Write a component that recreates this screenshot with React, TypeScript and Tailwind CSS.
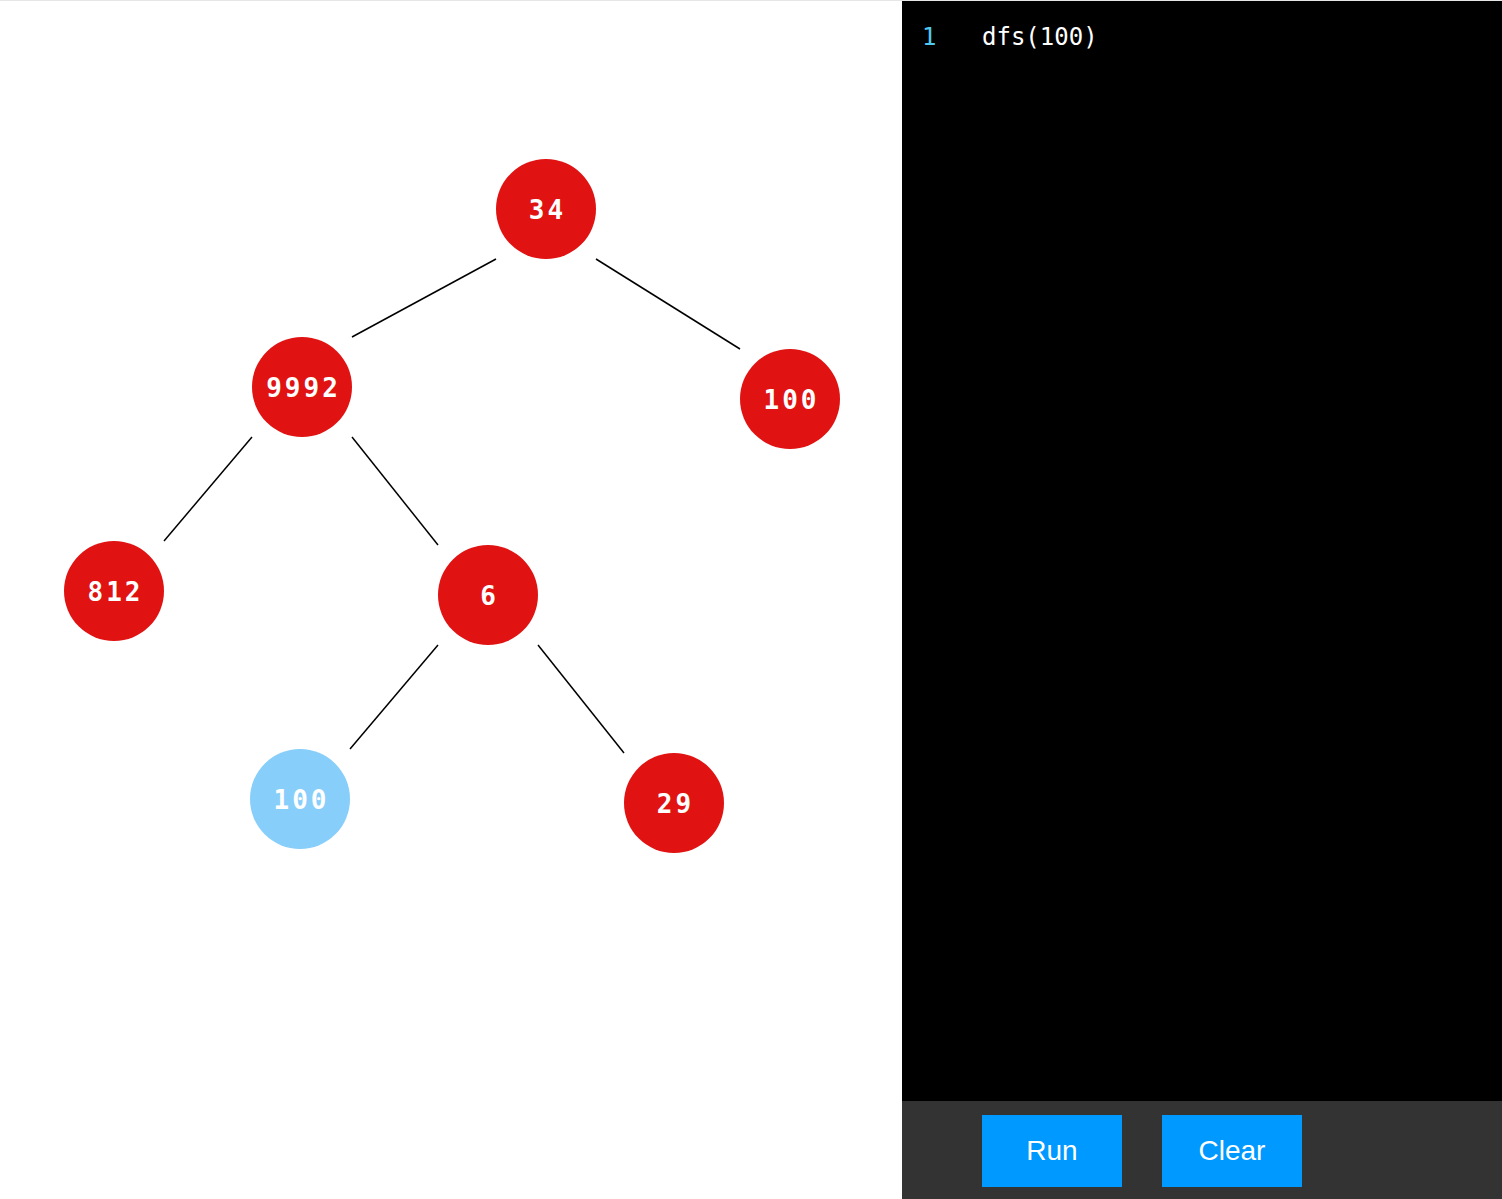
import React from "react";

type TreeNode = { id: string; label: string; x: number; y: number; visited?: boolean };

// centres of nodes on the canvas
const NODES: TreeNode[] = [
  { id: "a", label: "34", x: 546, y: 208 },
  { id: "b", label: "9992", x: 302, y: 386 },
  { id: "c", label: "100", x: 790, y: 398 },
  { id: "d", label: "812", x: 114, y: 590 },
  { id: "e", label: "6", x: 488, y: 594 },
  { id: "f", label: "100", x: 300, y: 798, visited: true },
  { id: "g", label: "29", x: 674, y: 802 },
];

const EDGES: [string, string][] = [
  ["a", "b"],
  ["a", "c"],
  ["b", "d"],
  ["b", "e"],
  ["e", "f"],
  ["e", "g"],
];

const R = 50;

function Edge({ from, to }: { from: TreeNode; to: TreeNode }) {
  // edges go from a corner of the parent box to a corner of the child box
  const dir = to.x < from.x ? -1 : 1;
  return (
    <line
      x1={from.x + dir * R}
      y1={from.y + R}
      x2={to.x - dir * R}
      y2={to.y - R}
      stroke="#000"
      strokeWidth={1.5}
    />
  );
}

function Canvas() {
  const byId = Object.fromEntries(NODES.map((n) => [n.id, n]));
  return (
    <div className="relative w-[902px] h-full bg-white">
      <svg className="absolute inset-0" width={902} height={1198}>
        {EDGES.map(([a, b]) => (
          <Edge key={a + b} from={byId[a]} to={byId[b]} />
        ))}
      </svg>
      {NODES.map((n) => (
        <div
          key={n.id}
          className={
            "absolute w-[100px] h-[100px] rounded-full flex items-center justify-center pt-[2px] pl-[3px] text-white text-[26px] font-bold tracking-[3px] font-['DejaVu_Sans_Mono',monospace] " +
            (n.visited ? "bg-[#87cefa]" : "bg-[#e01212]")
          }
          style={{ left: n.x - R, top: n.y - R }}
        >
          {n.label}
        </div>
      ))}
    </div>
  );
}

function Editor() {
  return (
    <div className="w-[600px] h-full flex flex-col">
      <div className="flex-1 bg-black pt-[20px] font-['DejaVu_Sans_Mono',monospace] text-[24px] leading-[32px]">
        <div className="flex">
          <span className="w-[80px] pl-[20px] text-[#4fc9f0]">1</span>
          <span className="text-white">dfs(100)</span>
        </div>
      </div>
      <div className="h-[98px] bg-[#333333] flex items-start pt-[14px] pl-[80px] gap-[40px]">
        <button className="w-[140px] h-[72px] bg-[#0099ff] text-white text-[28px] font-['Liberation_Sans',Arial,sans-serif]">
          Run
        </button>
        <button className="w-[140px] h-[72px] bg-[#0099ff] text-white text-[28px] font-['Liberation_Sans',Arial,sans-serif]">
          Clear
        </button>
      </div>
    </div>
  );
}

export default function App() {
  return (
    <div className="w-[1502px] h-[1199px] border-t border-[#e6e6e6] flex overflow-hidden">
      <Canvas />
      <Editor />
    </div>
  );
}
